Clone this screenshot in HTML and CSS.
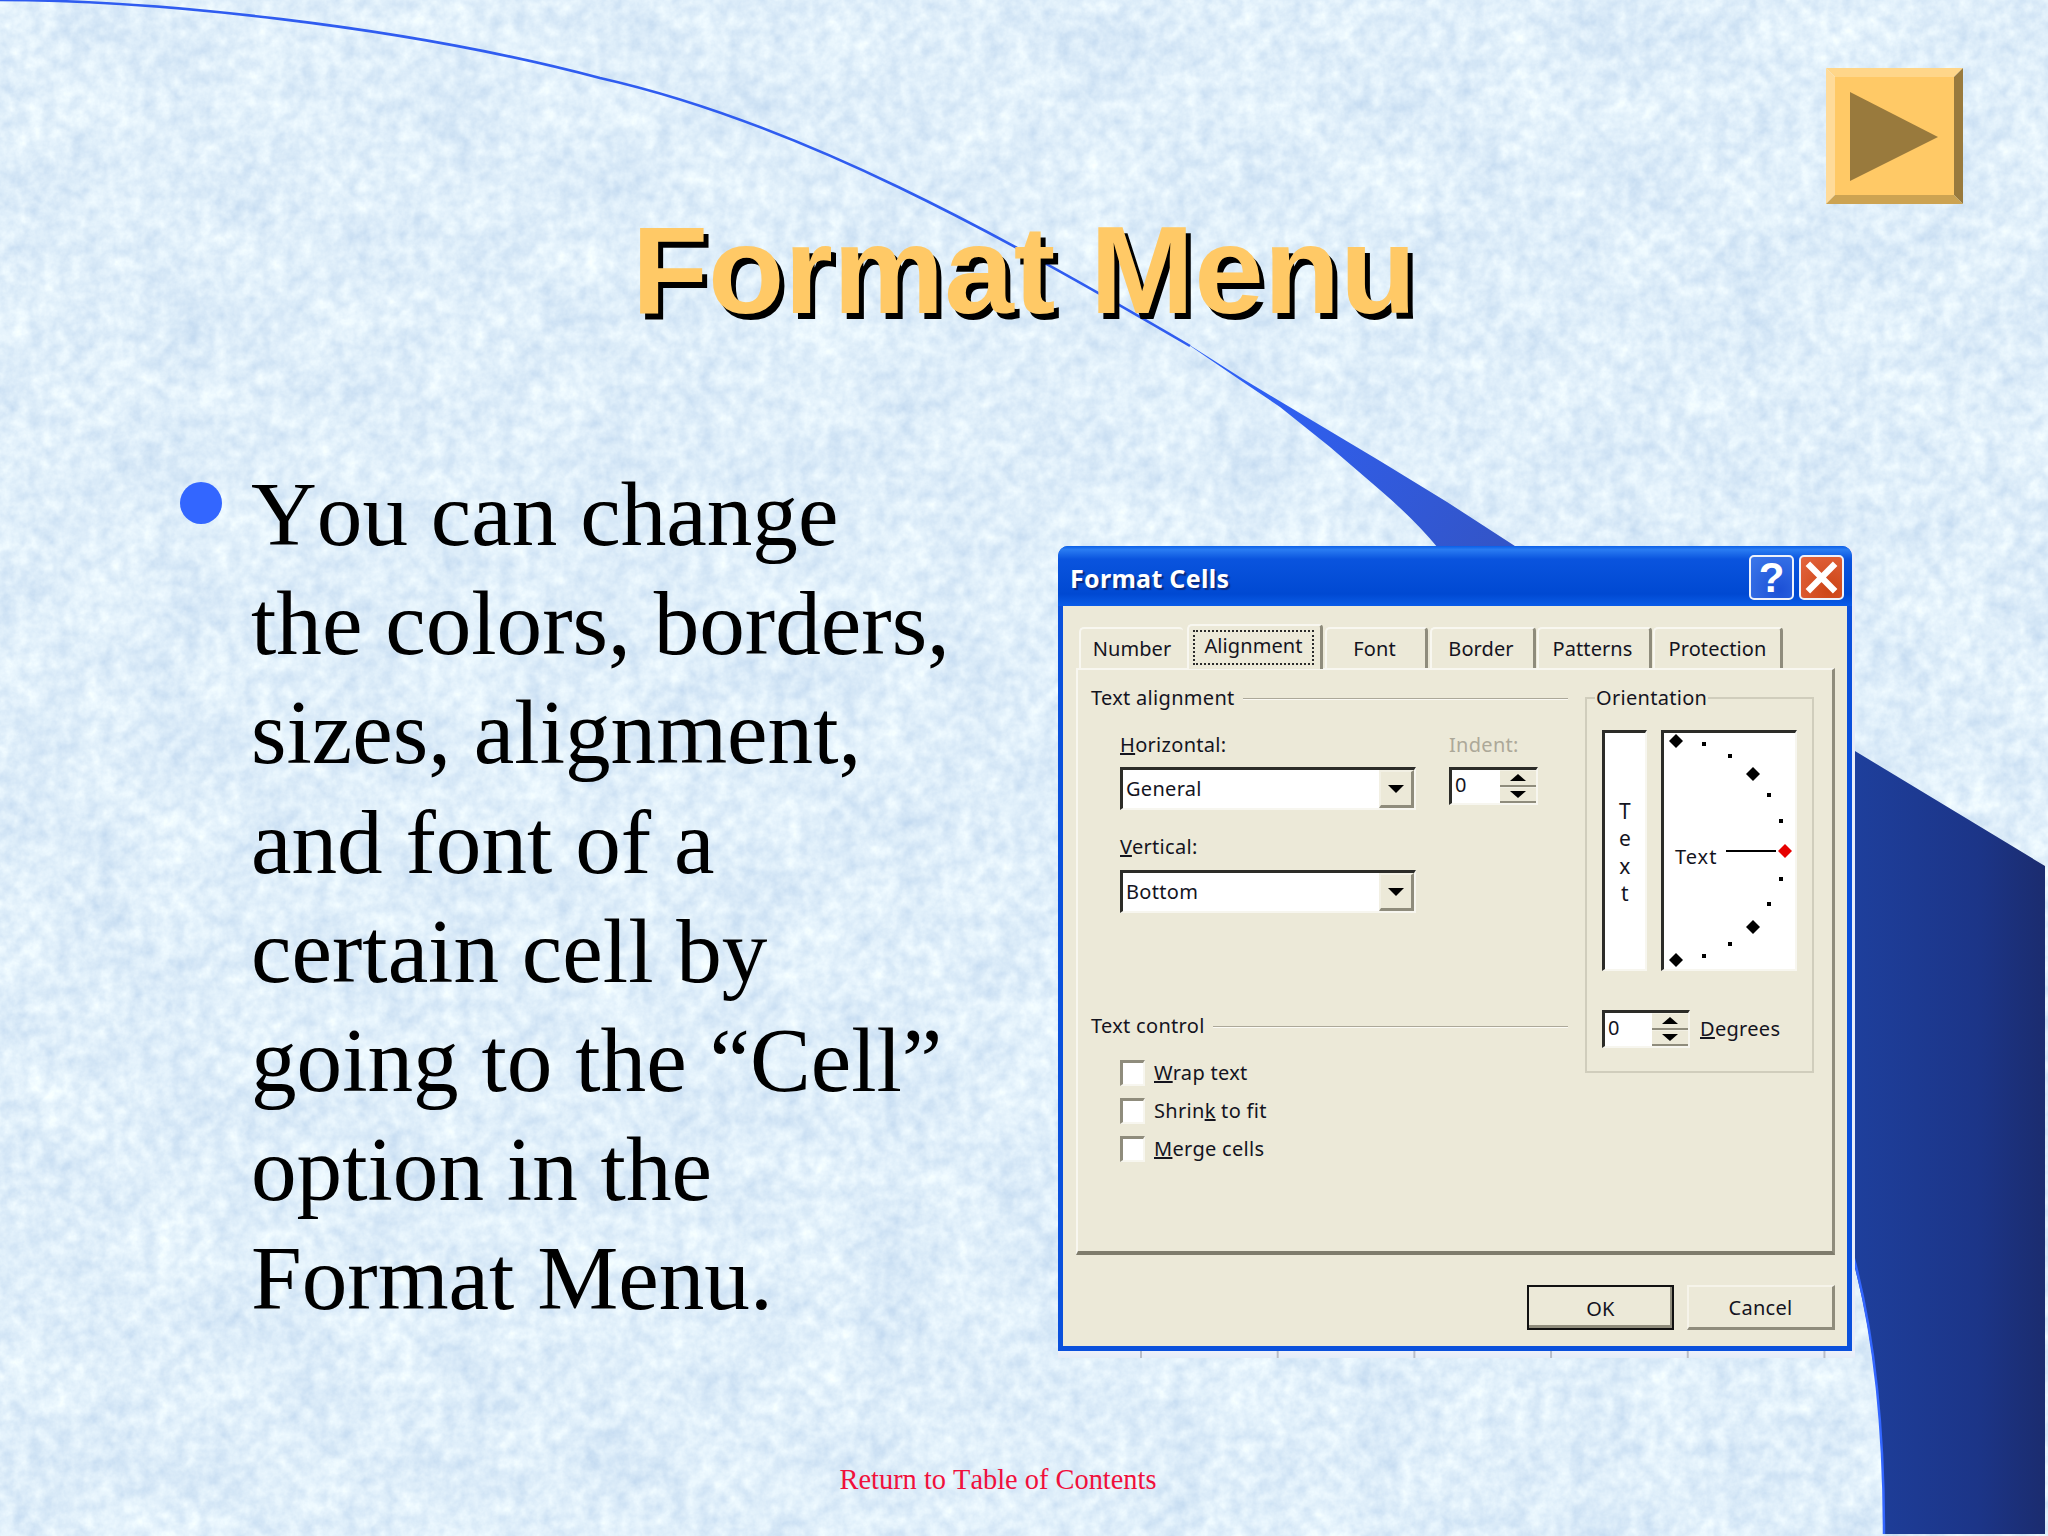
FILE: index.html
```html
<!DOCTYPE html>
<html lang="en">
<head>
<meta charset="utf-8">
<title>Format Menu</title>
<link rel="stylesheet" href="styles.css">
</head>
<body>
<main class="slide">
  <svg class="texture" width="2048" height="1536" aria-hidden="true">
    <filter id="paper" x="0" y="0" width="100%" height="100%" color-interpolation-filters="sRGB">
      <feTurbulence type="fractalNoise" baseFrequency="0.014" numOctaves="3" seed="11" result="low"/>
      <feColorMatrix in="low" type="matrix" values="1 0 0 0 0 1 0 0 0 0 1 0 0 0 0 0 0 0 0 1" result="lowA"/>
      <feTurbulence type="fractalNoise" baseFrequency="0.07" numOctaves="4" seed="4" result="high"/>
      <feColorMatrix in="high" type="matrix" values="1 0 0 0 0 1 0 0 0 0 1 0 0 0 0 0 0 0 0 1" result="highA"/>
      <feComposite in="lowA" in2="highA" operator="arithmetic" k1="0" k2="0.35" k3="0.65" k4="0"/>
      <feColorMatrix type="matrix" values="0.3 0 0 0 0.725  0.22 0 0 0 0.825  0.1 0 0 0 0.93  0 0 0 0 1"/>
    </filter>
    <rect width="2048" height="1536" filter="url(#paper)"/>
  </svg>

  <svg class="decor" viewBox="0 0 2048 1536" width="2048" height="1536" aria-hidden="true">
    <defs>
      <linearGradient id="navy" x1="1854" x2="2045" y1="0" y2="0" gradientUnits="userSpaceOnUse">
        <stop offset="0" stop-color="#1e3f9c"/>
        <stop offset="0.65" stop-color="#1c3588"/>
        <stop offset="1" stop-color="#1b2c6f"/>
      </linearGradient>
      <linearGradient id="wedge" x1="1260" x2="1500" y1="390" y2="540" gradientUnits="userSpaceOnUse">
        <stop offset="0" stop-color="#2f60f4"/>
        <stop offset="1" stop-color="#3355c8"/>
      </linearGradient>
    </defs>
    <path class="curve" d="M0,0 C150,0 400,25 600,78 C800,123 1000,235 1190,346"/>
    <path fill="url(#wedge)" d="M1180,339 L1243,379 L1313,421 L1380,461 L1447,502 L1518,548 L1438,548 Q1415,520 1380,490 L1330,447 L1280,407 L1243,382 Z"/>
    <path fill="url(#navy)" d="M1850,748 L2045,866 V1534 H1884 C1884,1440 1876,1340 1850,1250 Z"/>
    <path class="edge" d="M1884,1534 C1884,1440 1876,1340 1853,1255"/>
  </svg>

  <h1 class="title">Format Menu</h1>

  <section class="points">
    <span class="bullet"></span>
    <p class="point">You can change<br>the colors, borders,<br>sizes, alignment,<br>and font of a<br>certain cell by<br>going to the “Cell”<br>option in the<br>Format Menu.</p>
  </section>

  <footer class="return">Return to Table of Contents</footer>

  <div class="action-button">
    <svg viewBox="0 0 137 136" width="137" height="136" aria-hidden="true">
      <polygon points="0,0 137,0 128,9 9,9" fill="#ffd689"/>
      <polygon points="0,0 9,9 9,127 0,136" fill="#ffdb99"/>
      <polygon points="137,0 137,136 128,127 128,9" fill="#997a3d"/>
      <polygon points="0,136 9,127 128,127 137,136" fill="#cca352"/>
      <rect x="9" y="9" width="119" height="118" fill="#ffc966"/>
      <polygon points="24,24 112,69 24,113" fill="#997a3d"/>
    </svg>
  </div>

  <div class="dialog">
    <div class="titlebar">
      <span class="caption">Format Cells</span>
      <div class="caption-buttons">
        <span class="cap-btn cap-help">?</span>
        <span class="cap-btn cap-close">
          <svg viewBox="0 0 45 45" width="41" height="41" aria-hidden="true"><path d="M10,10 L35,35 M35,10 L10,35" stroke="#fff" stroke-width="7" stroke-linecap="square" fill="none"/></svg>
        </span>
      </div>
    </div>
    <div class="client">
      <div class="tabs">
        <span class="tab tab-number">Number</span>
        <span class="tab tab-active tab-alignment"><span class="focus">Alignment</span></span>
        <span class="tab tab-font">Font</span>
        <span class="tab tab-border">Border</span>
        <span class="tab tab-patterns">Patterns</span>
        <span class="tab tab-protection">Protection</span>
      </div>
      <div class="panel">
        <div class="left-col">
          <div class="legend"><span>Text alignment</span><i class="rule"></i></div>
          <div class="align-grid">
            <label class="field-label"><u>H</u>orizontal:</label>
            <label class="field-label disabled">Indent:</label>
            <div class="combo"><span class="combo-value">General</span><span class="combo-btn"><i class="arrow-down"></i></span></div>
            <div class="spin spin-indent"><span class="spin-value">0</span><span class="spin-btns"><span class="spin-btn"><i class="arrow-up small"></i></span><span class="spin-btn"><i class="arrow-down small"></i></span></span></div>
          </div>
          <div class="vertical-group">
            <label class="field-label"><u>V</u>ertical:</label>
            <div class="combo"><span class="combo-value">Bottom</span><span class="combo-btn"><i class="arrow-down"></i></span></div>
          </div>
          <div class="legend legend-control"><span>Text control</span><i class="rule"></i></div>
          <div class="checks">
            <div class="check"><span class="box"></span><span><u>W</u>rap text</span></div>
            <div class="check"><span class="box"></span><span>Shrin<u>k</u> to fit</span></div>
            <div class="check"><span class="box"></span><span><u>M</u>erge cells</span></div>
          </div>
        </div>
        <fieldset class="orientation">
          <legend>Orientation</legend>
          <div class="orient-row">
            <div class="sunken vertical-text"><span>T</span><span>e</span><span>x</span><span>t</span></div>
            <div class="sunken dial">
              <svg viewBox="1665 733 131 236" width="131" height="236" aria-hidden="true">
                <g fill="#000">
                  <polygon points="1677,734 1684,741 1677,748 1670,741"/>
                  <polygon points="1754,767 1761,774 1754,781 1747,774"/>
                  <polygon points="1754,920 1761,927 1754,934 1747,927"/>
                  <polygon points="1677,953 1684,960 1677,967 1670,960"/>
                  <rect x="1703" y="742" width="4" height="4"/>
                  <rect x="1729" y="754" width="4" height="4"/>
                  <rect x="1768" y="793" width="4" height="4"/>
                  <rect x="1780" y="819" width="4" height="4"/>
                  <rect x="1780" y="877" width="4" height="4"/>
                  <rect x="1768" y="902" width="4" height="4"/>
                  <rect x="1729" y="942" width="4" height="4"/>
                  <rect x="1703" y="954" width="4" height="4"/>
                  <rect x="1727" y="850" width="50" height="2"/>
                </g>
                <polygon points="1786,844 1793,851 1786,858 1779,851" fill="#e60000"/>
                <text class="dial-text" x="1676" y="864">Text</text>
              </svg>
            </div>
          </div>
          <div class="degrees-row">
            <div class="spin spin-degrees"><span class="spin-value">0</span><span class="spin-btns"><span class="spin-btn"><i class="arrow-up small"></i></span><span class="spin-btn"><i class="arrow-down small"></i></span></span></div>
            <span><u>D</u>egrees</span>
          </div>
        </fieldset>
      </div>
      <div class="actions">
        <button class="btn btn-default">OK</button>
        <button class="btn">Cancel</button>
      </div>
    </div>
  </div>
</main>
</body>
</html>
```

FILE: styles.css
```css
* { box-sizing: border-box; }
html, body { margin: 0; padding: 0; }
body { width: 2048px; height: 1536px; overflow: hidden; background: #d7e7f7; }

.slide {
  position: relative;
  width: 2048px;
  height: 1536px;
  overflow: hidden;
  display: flex;
  flex-direction: column;
}
.texture, .decor { position: absolute; left: 0; top: 0; display: block; }
.curve { fill: none; stroke: #2f5cf0; stroke-width: 2.6; }
.edge { fill: none; stroke: #3366ff; stroke-width: 2.5; }

.title {
  position: relative;
  margin: 200px 0 0;
  height: 140px;
  text-align: center;
  font: bold 125px/140px "Liberation Sans", Arial, sans-serif;
  color: #ffc966;
  text-shadow: 5px 6px 0 #000;
}

.points {
  position: relative;
  margin-top: 120px;
  padding-left: 180px;
  display: grid;
  grid-template-columns: 42px auto;
  column-gap: 29px;
  justify-content: start;
}
.bullet {
  width: 42px;
  height: 42px;
  margin-top: 22px;
  border-radius: 50%;
  background: #3366ff;
}
.point {
  margin: 0;
  font: 91.2px/109.2px "Liberation Serif", "Times New Roman", serif;
  font-kerning: none;
  color: #000;
}

.return {
  position: relative;
  margin-top: auto;
  padding: 0 52px 40px 0;
  text-align: center;
  font: 28.4px/32px "Liberation Serif", "Times New Roman", serif;
  font-kerning: none;
  color: #f0103c;
}

.action-button { position: absolute; left: 1826px; top: 68px; width: 137px; height: 136px; }
.action-button svg { display: block; }

/* Dialog window */
.dialog {
  position: absolute;
  left: 1058px;
  top: 546px;
  width: 794px;
  height: 805px;
  display: flex;
  flex-direction: column;
  border-radius: 10px 10px 0 0;
  background: #0a50dc;
  padding: 0 5px 5px;
  box-shadow: 3px 0 0 #e8ecf8;
  font: 20px/26px "Noto Sans", Tahoma, sans-serif;
  letter-spacing: 0.3px;
  color: #14141e;
}
.dialog::after {
  content: "";
  position: absolute;
  left: 0;
  right: -3px;
  top: 100%;
  height: 7px;
  background:
    linear-gradient(90deg, #b8bdc8 0 2px, transparent 2px) 82px 0 / 136.7px 100% repeat-x,
    linear-gradient(#eef0fa, #e3edf8);
}
.titlebar {
  flex: none;
  margin: 0 -5px;
  height: 60px;
  padding: 9px 8px 6px 12px;
  display: flex;
  align-items: center;
  justify-content: space-between;
  border-radius: 10px 10px 0 0;
  background: linear-gradient(#0a5fe8 0, #2a7cf2 6%, #0a54de 22%, #0049d2 80%, #0a5ce8 100%);
}
.caption {
  font-weight: 700;
  font-size: 25px;
  letter-spacing: 0.3px;
  color: #fff;
  text-shadow: 2px 2px 1px #0a2a80;
}
.caption-buttons { display: flex; gap: 5px; }
.cap-btn {
  width: 45px;
  height: 45px;
  display: flex;
  align-items: center;
  justify-content: center;
  border: 2px solid #eef2fb;
  border-radius: 5px;
  color: #fff;
}
.cap-help {
  background: radial-gradient(circle at 70% 80%, #1c50d6, #3c78ea);
  font: bold 42px/41px "Liberation Sans", Arial, sans-serif;
  letter-spacing: 0;
}
.cap-close { background: radial-gradient(circle at 70% 80%, #cc4415, #e4653f); }
.cap-close svg { display: block; }

.client {
  flex: 1;
  background: #ece9d8;
  padding: 18px 12px 0 13px;
  display: flex;
  flex-direction: column;
}
.tabs { display: flex; gap: 2px; height: 44px; margin-left: 3px; align-items: flex-end; position: relative; z-index: 1; letter-spacing: 0.1px; }
.tab {
  height: 41px;
  padding-top: 7px;
  text-align: center;
  background: #ece9d8;
  border-top: 2px solid #f8f7f0;
  border-left: 2px solid #f8f7f0;
  border-right: 3px solid #8f8c7c;
  border-radius: 5px 4px 0 0;
}
.tab-number { width: 104px; border-right: 0; }
.tab-alignment { width: 136px; margin-left: 2px; }
.tab-font { width: 103px; padding-right: 3px; }
.tab-border { width: 106px; padding-right: 3px; }
.tab-patterns { width: 115px; margin-left: -1px; padding-right: 3px; }
.tab-protection { width: 130px; margin-left: -1px; }
.tab-active { height: 45px; padding: 4px 6px 0 4px; margin-bottom: -1px; }
.focus { display: block; height: 35px; border: 2px dotted #2a2a2a; line-height: 28px; }

.panel {
  height: 587px;
  background: #ece9d8;
  border-top: 2px solid #f8f7f0;
  border-left: 2px solid #f8f7f0;
  border-right: 3px solid #8f8c7c;
  border-bottom: 4px solid #7f7c6c;
  padding: 15px 19px 0 13px;
  display: grid;
  grid-template-columns: 477px 229px;
  column-gap: 17px;
  align-items: start;
}
.legend { display: flex; align-items: center; gap: 8px; height: 26px; }
.rule { flex: 1; height: 2px; background: #aca899; border-bottom: 1px solid #fbfaf4; margin-top: 1px; }
.legend-control { margin-top: 100px; }

.align-grid {
  margin: 21px 0 0 29px;
  display: grid;
  grid-template-columns: 296px 89px;
  column-gap: 33px;
  row-gap: 9px;
  align-items: start;
}
.field-label { display: block; height: 26px; }
.disabled { color: #aca899; }
.vertical-group { margin: 24px 0 0 29px; width: 296px; display: flex; flex-direction: column; gap: 10px; }

.combo, .spin, .sunken {
  background: #fff;
  border-style: solid;
  border-width: 3px 2px 2px 3px;
  border-color: #2c2c28 #f7f6ef #f7f6ef #2c2c28;
}
.combo { display: flex; height: 43px; }
.combo-value { flex: 1; padding: 6px 0 0 3px; }
.combo-btn {
  width: 35px;
  display: flex;
  align-items: center;
  justify-content: center;
  background: #ece9d8;
  border-style: solid;
  border-width: 2px 3px 3px 2px;
  border-color: #f2f0e4 #8f8c7c #8f8c7c #f2f0e4;
}
.arrow-down, .arrow-up { display: block; width: 0; height: 0; border-style: solid; border-color: transparent; }
.arrow-down { border-width: 8px 8px 0; border-top-color: #000; }
.arrow-up { border-width: 0 8px 8px; border-bottom-color: #000; }
.arrow-down.small { border-width: 7px 8px 0; }
.arrow-up.small { border-width: 0 8px 7px; }

.spin { display: flex; height: 38px; }
.spin-value { flex: 1; padding: 1px 0 0 3px; line-height: 27px; }
.spin-btns { width: 36px; display: flex; flex-direction: column; }
.spin-btn {
  flex: 1;
  display: flex;
  align-items: center;
  justify-content: center;
  background: #ece9d8;
  border-bottom: 2px solid #8f8c7c;
  border-top: 1px solid #f2f0e4;
}
.spin-degrees { width: 88px; }

.checks { margin: 21px 0 0 29px; display: flex; flex-direction: column; gap: 12px; }
.check { display: flex; align-items: center; gap: 9px; height: 26px; }
.box {
  width: 25px;
  height: 26px;
  background: #fff;
  border-style: solid;
  border-width: 3px 2px 2px 3px;
  border-color: #8f8c7c #f7f6ef #f7f6ef #8f8c7c;
}

.orientation {
  margin: 0;
  padding: 19px 15px 0;
  min-width: 0;
  height: 388px;
  border: 2px solid #d0cdbc;
}
.orientation legend { margin-left: -7px; padding: 0 1px; height: 26px; }
.orient-row { display: flex; gap: 14px; height: 241px; }
.vertical-text {
  width: 46px;
  display: flex;
  flex-direction: column;
  align-items: center;
  justify-content: center;
  line-height: 27.4px;
  padding-top: 3px;
  font-size: 21px;
}
.dial { width: 136px; position: relative; }
.dial svg { display: block; }
.dial-text { font: 20px "Noto Sans", Tahoma, sans-serif; letter-spacing: 1px; fill: #14141e; }
.degrees-row { margin-top: 39px; display: flex; align-items: center; gap: 10px; }

.actions {
  margin-top: 30px;
  display: flex;
  justify-content: flex-end;
  gap: 13px;
}
.btn {
  width: 148px;
  height: 45px;
  padding: 2px 0 0;
  font: inherit;
  letter-spacing: inherit;
  color: inherit;
  background: #ece9d8;
  border-style: solid;
  border-width: 2px 3px 3px 2px;
  border-color: #f6f4ea #8f8c7c #8f8c7c #f6f4ea;
}
.btn-default {
  width: 147px;
  border: 2px solid #111;
  box-shadow: inset -2px -3px 0 #8f8c7c;
}
```
